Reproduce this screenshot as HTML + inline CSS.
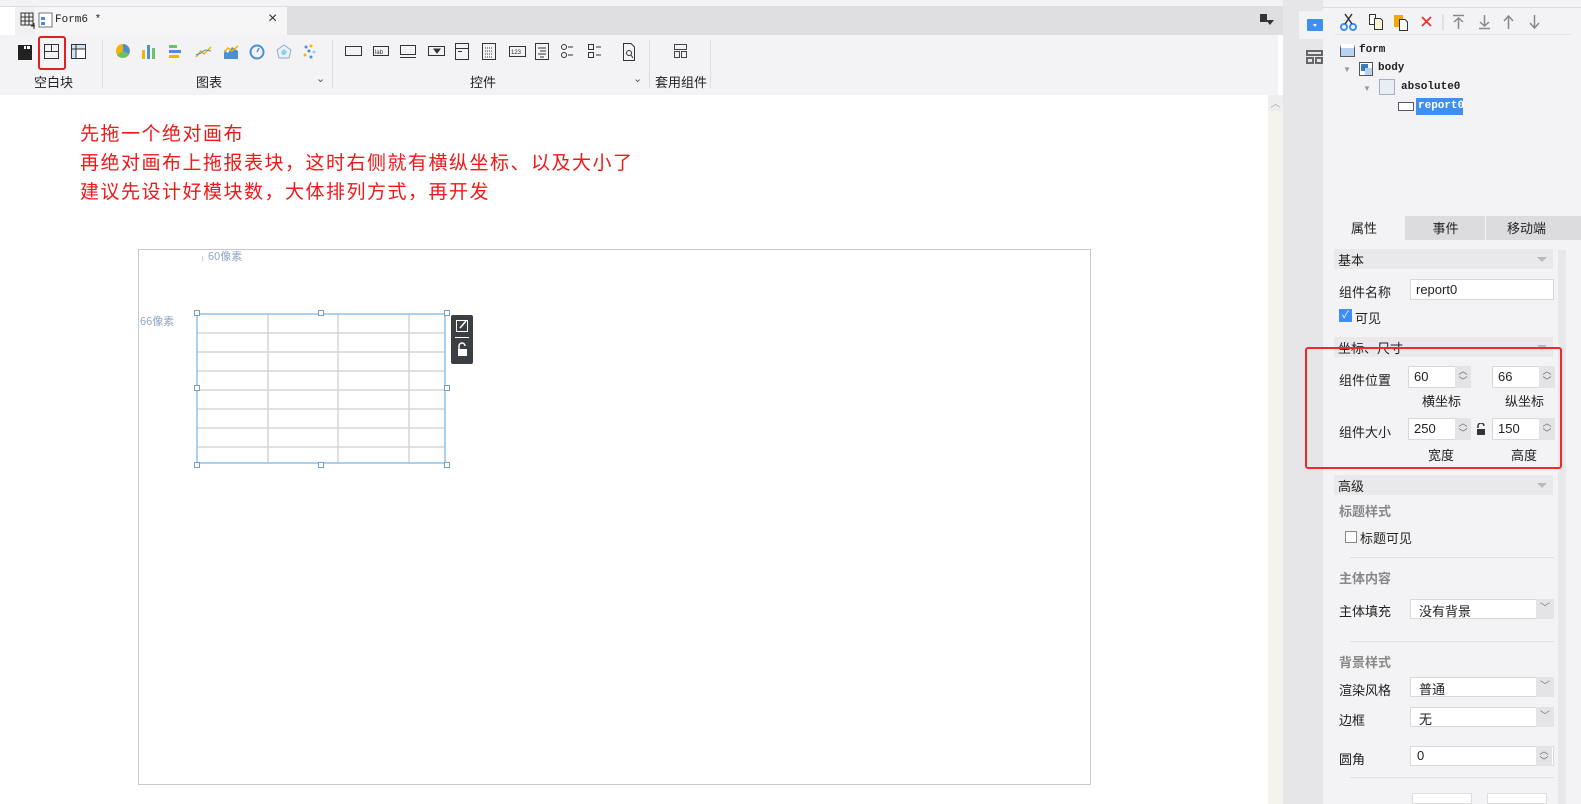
<!DOCTYPE html>
<html><head><meta charset="utf-8"><style>
*{box-sizing:border-box;margin:0;padding:0}
body{width:1581px;height:804px;overflow:hidden;position:relative;background:#fff;font-family:"Liberation Sans","Noto Sans CJK SC",sans-serif;font-size:12px;color:#222}
.a{position:absolute}
.cn{font-family:"Noto Sans CJK SC","WenQuanYi Zen Hei",sans-serif}
.inp{position:absolute;background:#fff;border:1px solid #d8d8d8;height:22px;font-size:13px;padding:2px 5px}
.sp{position:absolute;width:16px;height:22px;background:#e4e4e6;color:#666;font-size:9px;line-height:10px;text-align:center}
.sec{position:absolute;left:1334px;width:219px;height:20px;background:#e9e9eb;font-size:13px;padding:1px 4px}
.sec:after{content:"";position:absolute;right:6px;top:8px;border:5px solid transparent;border-top:5px solid #bbb}
.lbl{position:absolute;font-size:13px}
.gl{position:absolute;font-size:13px;color:#888;font-weight:bold}
.dd{position:absolute;height:20px;width:18px;background:#e4e4e6;color:#777;text-align:center;font-size:10px;line-height:20px}
</style></head><body>
<!-- top strip -->
<div class="a" style="left:0;top:0;width:1295px;height:7px;background:#f3f3f5;border-bottom:1px solid #ddd"></div>
<!-- tab bar -->
<div class="a" style="left:15px;top:7px;width:1280px;height:28px;background:#dfdfe1"></div>
<div class="a" style="left:15px;top:7px;width:20px;height:28px;background:#f0f0f2"></div>
<svg class="a" style="left:20px;top:12px" width="18" height="18"><rect x="1" y="1" width="12" height="12" fill="none" stroke="#333"/><path d="M1 5H13M1 9H13M5 1V13M9 1V13M14 11V17M11 14H17" stroke="#333"/></svg>
<div class="a" style="left:35px;top:7px;width:252px;height:28px;background:#f6f6f7"></div>
<svg class="a" style="left:38px;top:12px" width="16" height="16"><rect x="1" y="1" width="13" height="14" fill="#fff" stroke="#777"/><rect x="3" y="5" width="4" height="3" fill="#4a8fd8"/><rect x="3" y="10" width="4" height="3" fill="#4a8fd8"/></svg>
<div class="a" style="left:55px;top:14px;font-family:'Liberation Mono',monospace;font-size:11px">Form6 *</div>
<div class="a" style="left:268px;top:10px;font-size:16px;color:#333">×</div>
<svg class="a" style="left:1260px;top:14px" width="14" height="12"><rect x="0" y="0" width="7" height="8" fill="#333"/><path d="M6 6H14L10 11Z" fill="#333"/></svg>
<!-- toolbar -->
<div class="a" style="left:0;top:35px;width:1278px;height:60px;background:#f3f3f5"></div>
<div class="a" style="left:102px;top:40px;width:1px;height:48px;background:#ddd"></div>
<div class="a" style="left:332px;top:40px;width:1px;height:48px;background:#ddd"></div>
<div class="a" style="left:649px;top:40px;width:1px;height:48px;background:#ddd"></div>
<div class="a" style="left:710px;top:40px;width:1px;height:48px;background:#ddd"></div>
<div class="a" style="left:18px;top:45px;width:14px;height:15px;background:#222"></div>
<div class="a" style="left:24px;top:46px;width:2px;height:3px;background:#fff"></div><div class="a" style="left:27px;top:46px;width:3px;height:3px;background:#fff"></div>
<div class="a" style="left:38px;top:36px;width:28px;height:34px;border:2px solid #e02020;border-radius:3px"></div>
<svg class="a" style="left:44px;top:44px" width="16" height="16"><rect x=".5" y=".5" width="14" height="14" fill="none" stroke="#333"/><path d="M7.5 .5V7.5M.5 7.5H14.5" stroke="#333"/></svg>
<svg class="a" style="left:71px;top:44px" width="16" height="16"><rect x=".5" y=".5" width="14" height="14" fill="#cfe3f5" stroke="#333"/><rect x="5" y="5" width="9" height="9" fill="#fff"/><path d="M.5 5H14.5M5 .5V14.5" stroke="#333"/></svg>
<div class="a cn" style="left:34px;top:72px;font-size:13px">空白块</div>
<div class="a cn" style="left:196px;top:72px;font-size:13px">图表</div>
<div class="a" style="left:316px;top:72px;font-size:11px;color:#555">⌄</div>
<div class="a cn" style="left:470px;top:72px;font-size:13px">控件</div>
<div class="a" style="left:633px;top:72px;font-size:11px;color:#555">⌄</div>
<div class="a cn" style="left:655px;top:72px;font-size:13px">套用组件</div>
<!-- chart icons -->
<svg class="a" style="left:114px;top:42px" width="215" height="20">
<circle cx="9" cy="9" r="7" fill="#f4b400"/><path d="M9 9V2A7 7 0 0 1 15 12Z" fill="#4a8fd8"/><path d="M9 9L15 12A7 7 0 0 1 3 13Z" fill="#6ac26a"/>
<rect x="28" y="8" width="3" height="9" fill="#f4b400"/><rect x="33" y="3" width="3" height="14" fill="#4a8fd8"/><rect x="38" y="6" width="3" height="11" fill="#6ac26a"/>
<rect x="55" y="3" width="8" height="3" fill="#6ac26a"/><rect x="55" y="8" width="12" height="3" fill="#4a8fd8"/><rect x="55" y="13" width="10" height="3" fill="#f4b400"/>
<path d="M82 15L87 9L90 12L97 5" stroke="#f4b400" fill="none" stroke-width="1.5"/><path d="M82 13L87 11L91 8L97 9" stroke="#4a8fd8" fill="none"/>
<path d="M110 17V8L114 11L118 5L124 9V17Z" fill="#4a8fd8"/><path d="M110 10L114 6L118 9L124 4" stroke="#f4b400" fill="none" stroke-width="1.5"/>
<circle cx="143" cy="10" r="6.5" fill="none" stroke="#4a8fd8" stroke-width="2"/><path d="M143 10L145 6" stroke="#4a8fd8" stroke-width="1.5"/>
<path d="M170 3L177 8L175 16H165L163 8Z" fill="#e8f2fa" stroke="#9ab"/><path d="M170 7L173 10L171 13H168L167 10Z" fill="#8fd0ea"/>
<circle cx="192" cy="5" r="1.5" fill="#4a8fd8"/><circle cx="197" cy="4" r="1.5" fill="#f4b400"/><circle cx="195" cy="9" r="1.5" fill="#4a8fd8"/><circle cx="200" cy="10" r="1.5" fill="#8fd0ea"/><circle cx="191" cy="13" r="1.5" fill="#f4b400"/><circle cx="197" cy="15" r="1.5" fill="#4a8fd8"/>
</svg>
<!-- control icons -->
<svg class="a" style="left:345px;top:42px" width="300" height="20" fill="none" stroke="#333">
<rect x=".5" y="4.5" width="16" height="9"/>
<rect x="28.5" y="4.5" width="15" height="9"/><text x="30" y="12" font-size="6" fill="#333" stroke="none">lab</text>
<rect x="55.5" y="3.5" width="15" height="9"/><path d="M55 15.5H71"/>
<rect x="83.5" y="4.5" width="16" height="9"/><path d="M89 7H95L92 11Z" fill="#333"/>
<rect x="110.5" y="1.5" width="13" height="16"/><path d="M110 6.5H124M113 9.5H117"/>
<rect x="137.5" y="1.5" width="13" height="16"/><path d="M140 6H148M140 9H148M140 12H148M140 15H148" stroke-dasharray="1 1"/>
<rect x="164.5" y="4.5" width="16" height="10"/><text x="166" y="12" font-size="6" fill="#333" stroke="none">123</text>
<rect x="190.5" y="1.5" width="13" height="16"/><path d="M193 6H201M195 9H201M193 12H201M195 15H199"/>
<circle cx="219" cy="5" r="2.5"/><circle cx="219" cy="13" r="2.5"/><path d="M223 5H228M223 13H228"/>
<rect x="243.5" y="2.5" width="5" height="5"/><rect x="243.5" y="10.5" width="5" height="5"/><path d="M251 5H256M251 13H256"/>
<path d="M278.5 1.5H286L289.5 5V18.5H278.5Z"/><circle cx="284" cy="11" r="2.5"/><path d="M286 13L288 16"/>
</svg>
<svg class="a" style="left:673px;top:43px" width="16" height="16" fill="none" stroke="#444"><rect x="1.5" y="1.5" width="12" height="5"/><rect x="1.5" y="8.5" width="5" height="6"/><rect x="8.5" y="8.5" width="5" height="6"/></svg>
<!-- scrollbar -->
<div class="a" style="left:1268px;top:95px;width:15px;height:709px;background:#f4f3ee"></div>
<div class="a" style="left:1268px;top:95px;width:15px;height:16px;background:#eee;color:#aaa;font-size:10px;text-align:center">︿</div>
<!-- side strip -->
<div class="a" style="left:1283px;top:0;width:40px;height:804px;background:#e6e6e8"></div>
<div class="a" style="left:1299px;top:11px;width:32px;height:28px;background:#f3f3f5"></div>
<div class="a" style="left:1307px;top:19px;width:16px;height:12px;background:#3d8ff5;border-radius:1px"></div>
<div class="a" style="left:1313px;top:24px;border:2px solid transparent;border-top:3px solid #fff"></div>
<svg class="a" style="left:1306px;top:50px" width="17" height="14" fill="none" stroke="#666" stroke-width="2"><rect x="1" y="1" width="15" height="4"/><rect x="1" y="8" width="6" height="5"/><rect x="10" y="8" width="6" height="5"/></svg>
<!-- right panel -->
<div class="a" style="left:1323px;top:0;width:258px;height:804px;background:#f3f3f5"></div>
<div class="a" style="left:1323px;top:7px;width:258px;height:1px;background:#ddd"></div>
<svg class="a" style="left:1340px;top:12px" width="210" height="20">
<circle cx="4" cy="15" r="3" fill="none" stroke="#3d8ff5" stroke-width="2"/><circle cx="13" cy="15" r="3" fill="none" stroke="#3d8ff5" stroke-width="2"/><path d="M5 12L12 2M12 12L5 2" stroke="#333" stroke-width="1.5"/>
<path d="M29.5 2.5H35.5V12.5H29.5Z" fill="#fff" stroke="#333"/><path d="M34.5 6.5H40.5L42.5 8.5V17.5H34.5Z" fill="#fdf3dd" stroke="#333"/>
<rect x="54" y="3" width="9" height="12" fill="#f4a800"/><path d="M59.5 7.5H65L67.5 10V18.5H59.5Z" fill="#fff" stroke="#333"/>
<path d="M82 5L91 14M91 5L82 14" stroke="#e33" stroke-width="1.8"/>
<path d="M103 2V18" stroke="#ccc"/>
<path d="M113 3.5H124M118.5 6V17M114 10L118.5 6L123 10" stroke="#888" stroke-width="1.5" fill="none"/>
<path d="M139 16.5H150M144.5 3V14M140 10L144.5 14L149 10" stroke="#888" stroke-width="1.5" fill="none"/>
<path d="M168.5 4V17M164 9L168.5 4L173 9" stroke="#888" stroke-width="1.5" fill="none"/>
<path d="M194.5 3V16M190 11L194.5 16L199 11" stroke="#888" stroke-width="1.5" fill="none"/>
</svg>
<div class="a" style="left:1335px;top:34px;width:236px;height:1px;background:#e2e2e4"></div>
<!-- tree -->
<div class="a" style="left:1340px;top:44px;width:15px;height:13px;border:1px solid #556;background:#b8d3ee;border-top:4px solid #fff;box-shadow:inset 0 -8px 0 #b8d3ee"></div>
<div class="a" style="left:1359px;top:44px;font-family:'Liberation Mono',monospace;font-size:11px;font-weight:bold">form</div>
<div class="a" style="left:1343px;top:65px;font-size:8px;color:#999">▼</div>
<div class="a" style="left:1359px;top:62px;width:14px;height:14px;border:1px solid #555;background:#fff"><div style="position:absolute;left:1px;top:1px;width:7px;height:7px;background:#3a7cc4"></div><div style="position:absolute;left:5px;top:5px;width:7px;height:7px;background:#b8d3ee"></div></div>
<div class="a" style="left:1378px;top:62px;font-family:'Liberation Mono',monospace;font-size:11px;font-weight:bold">body</div>
<div class="a" style="left:1363px;top:84px;font-size:8px;color:#999">▼</div>
<div class="a" style="left:1379px;top:79px;width:16px;height:16px;border:1px solid #aac;background:#e8eef4"></div>
<div class="a" style="left:1401px;top:81px;font-family:'Liberation Mono',monospace;font-size:11px;font-weight:bold">absolute0</div>
<div class="a" style="left:1398px;top:102px;width:16px;height:9px;border:1px solid #557;background:#fff"></div>
<div class="a" style="left:1416px;top:98px;width:47px;height:17px;background:#3d8ff5;color:#fff;font-family:'Liberation Mono',monospace;font-size:11px;font-weight:bold;padding:2px 2px">report0</div>
<!-- tabs -->
<div class="a" style="left:1323px;top:216px;width:258px;height:24px;background:#dcdcde"></div>
<div class="a cn" style="left:1323px;top:216px;width:82px;height:24px;background:#f3f3f5;text-align:center;font-size:13px;line-height:24px">属性</div>
<div class="a cn" style="left:1406px;top:216px;width:79px;height:24px;text-align:center;font-size:13px;line-height:24px">事件</div>
<div class="a" style="left:1485px;top:216px;width:1px;height:24px;background:#f3f3f5"></div>
<div class="a cn" style="left:1486px;top:216px;width:81px;height:24px;text-align:center;font-size:13px;line-height:24px">移动端</div>
<div class="a" style="left:1558px;top:250px;width:8px;height:554px;background:#e8e8ea"></div>
<!-- props -->
<div class="sec cn" style="top:249px">基本</div>
<div class="lbl cn" style="left:1339px;top:282px">组件名称</div>
<div class="inp" style="left:1410px;top:279px;width:144px;height:21px">report0</div>
<div class="a" style="left:1339px;top:309px;width:13px;height:13px;background:#3d8ff5;color:#fff;font-size:10px;line-height:13px;text-align:center">✓</div>
<div class="lbl cn" style="left:1355px;top:308px">可见</div>
<div class="sec cn" style="top:337px">坐标、尺寸</div>
<div class="lbl cn" style="left:1339px;top:370px">组件位置</div>
<div class="inp" style="left:1408px;top:366px;width:48px">60</div><div class="sp" style="left:1455px;top:366px">︿<br>﹀</div>
<div class="inp" style="left:1492px;top:366px;width:48px">66</div><div class="sp" style="left:1539px;top:366px">︿<br>﹀</div>
<div class="lbl cn" style="left:1422px;top:391px">横坐标</div>
<div class="lbl cn" style="left:1505px;top:391px">纵坐标</div>
<div class="lbl cn" style="left:1339px;top:422px">组件大小</div>
<div class="inp" style="left:1408px;top:418px;width:48px">250</div><div class="sp" style="left:1455px;top:418px">︿<br>﹀</div>
<svg class="a" style="left:1476px;top:423px" width="10" height="12"><path d="M2 5V3A3 3 0 0 1 8 3" fill="none" stroke="#333" stroke-width="1.5"/><rect x="1" y="6" width="8" height="6" fill="#333"/></svg>
<div class="inp" style="left:1492px;top:418px;width:48px">150</div><div class="sp" style="left:1539px;top:418px">︿<br>﹀</div>
<div class="lbl cn" style="left:1428px;top:445px">宽度</div>
<div class="lbl cn" style="left:1511px;top:445px">高度</div>
<div class="a" style="left:1305px;top:347px;width:257px;height:122px;border:2px solid #f02a2a;border-radius:3px"></div>
<div class="sec cn" style="top:475px">高级</div>
<div class="gl cn" style="left:1339px;top:501px">标题样式</div>
<div class="a" style="left:1345px;top:531px;width:12px;height:12px;border:1px solid #888;background:#fff"></div>
<div class="lbl cn" style="left:1360px;top:528px">标题可见</div>
<div class="a" style="left:1350px;top:557px;width:204px;height:1px;background:#e0e0e2"></div>
<div class="gl cn" style="left:1339px;top:568px">主体内容</div>
<div class="lbl cn" style="left:1339px;top:601px">主体填充</div>
<div class="inp" style="left:1410px;top:599px;width:144px;height:20px;padding:1px 8px">没有背景</div><div class="dd" style="left:1536px;top:599px">﹀</div>
<div class="a" style="left:1350px;top:641px;width:204px;height:1px;background:#e0e0e2"></div>
<div class="gl cn" style="left:1339px;top:652px">背景样式</div>
<div class="lbl cn" style="left:1339px;top:680px">渲染风格</div>
<div class="inp" style="left:1410px;top:677px;width:144px;height:20px;padding:1px 8px">普通</div><div class="dd" style="left:1536px;top:677px">﹀</div>
<div class="lbl cn" style="left:1339px;top:710px">边框</div>
<div class="inp" style="left:1410px;top:707px;width:144px;height:20px;padding:1px 8px">无</div><div class="dd" style="left:1536px;top:707px">﹀</div>
<div class="lbl cn" style="left:1339px;top:749px">圆角</div>
<div class="inp" style="left:1410px;top:746px;width:144px;height:20px;padding:1px 6px">0</div><div class="sp" style="left:1536px;top:746px;height:20px">︿<br>﹀</div>
<div class="a" style="left:1350px;top:777px;width:204px;height:1px;background:#e0e0e2"></div>
<div class="a" style="left:1412px;top:793px;width:60px;height:11px;background:#fff;border:1px solid #ddd"></div>
<div class="a" style="left:1487px;top:793px;width:60px;height:11px;background:#fff;border:1px solid #ddd"></div>
<!-- canvas -->
<div class="a cn" style="left:80px;top:118px;color:#f01818;font-size:19px;line-height:29px;letter-spacing:1.5px;white-space:nowrap">先拖一个绝对画布<br>再绝对画布上拖报表块，这时右侧就有横纵坐标、以及大小了<br>建议先设计好模块数，大体排列方式，再开发</div>
<div class="a" style="left:138px;top:249px;width:953px;height:536px;border:1px solid #c8c8c8"></div>
<div class="a cn" style="left:197px;top:248px;font-size:11px;color:#8fa6c0">╷60像素</div>
<div class="a cn" style="left:140px;top:313px;font-size:11px;color:#8fa6c0">66像素</div>
<svg class="a" style="left:190px;top:308px" width="262" height="162">
<g stroke="#d6d6d6" stroke-width="1.5">
<path d="M7 25H255M7 44H255M7 63H255M7 82H255M7 101H255M7 120H255M7 139H255M78 6V155M148 6V155M219 6V155"/>
</g>
<rect x="7" y="6" width="248" height="149" fill="none" stroke="#8fc0f2" stroke-width="1.5"/>
<g fill="#fff" stroke="#7a9cc0"><rect x="4.5" y="2.5" width="5" height="5"/><rect x="128.5" y="2.5" width="5" height="5"/><rect x="254.5" y="2.5" width="5" height="5"/><rect x="4.5" y="77.5" width="5" height="5"/><rect x="254.5" y="77.5" width="5" height="5"/><rect x="4.5" y="154.5" width="5" height="5"/><rect x="128.5" y="154.5" width="5" height="5"/><rect x="254.5" y="154.5" width="5" height="5"/></g>
</svg>
<div class="a" style="left:451px;top:315px;width:22px;height:49px;background:#3b3e42;border-radius:2px"></div>
<svg class="a" style="left:451px;top:315px" width="22" height="49"><rect x="5.5" y="5.5" width="11" height="11" fill="none" stroke="#fff"/><path d="M9 13L15 6" stroke="#fff" stroke-width="1.5"/><path d="M4 22.5H18" stroke="#fff"/><path d="M8 34V31A3 3 0 0 1 14 31" fill="none" stroke="#fff" stroke-width="1.5"/><rect x="7" y="34" width="9" height="7" fill="#fff"/></svg>
</body></html>
